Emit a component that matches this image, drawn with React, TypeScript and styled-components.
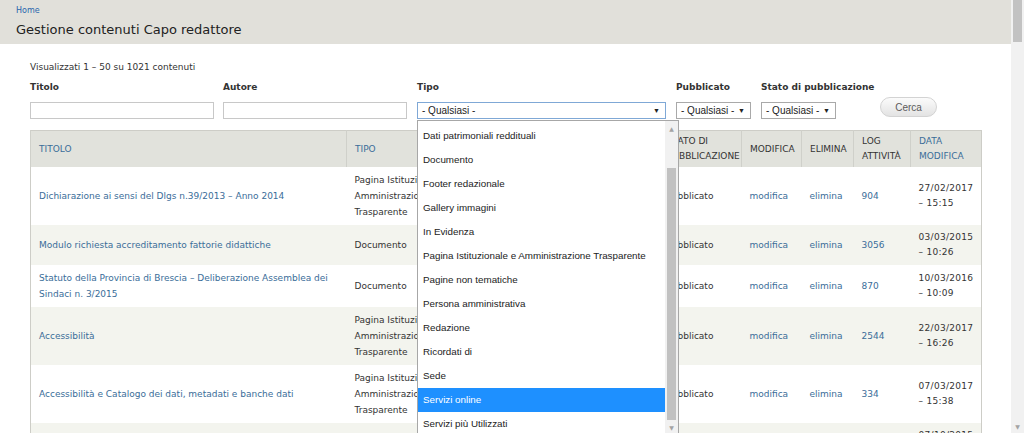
import React from 'react';
import styled, { createGlobalStyle } from 'styled-components';

const GlobalStyle = createGlobalStyle`
  html, body { margin: 0; padding: 0; background: #fff; }
  body { font-family: "DejaVu Sans", Verdana, sans-serif; color: #333; }
`;

const Page = styled.div`
  display: flex;
  width: 1024px;
  height: 433px;
  overflow: hidden;
`;

const Main = styled.div`
  flex: 1;
  min-width: 0;
  overflow: hidden;
`;

const Header = styled.header`
  height: 44px;
  box-sizing: border-box;
  padding: 5px 16px 0;
  background: #e1e0da;
`;

const Breadcrumb = styled.a`
  display: block;
  font-size: 8px;
  line-height: 11px;
  color: #2a67ad;
  text-decoration: none;
`;

const Title = styled.h1`
  margin: 4px 0 0;
  font-size: 13px;
  font-weight: normal;
  line-height: 20px;
  color: #222;
`;

const Content = styled.div`
  padding: 16px 0 0 30px;
`;

const Summary = styled.div`
  font-size: 9px;
  line-height: 14px;
  color: #333;
`;

const Filters = styled.div`
  display: flex;
  align-items: flex-end;
  margin-top: 6px;
`;

const FilterGroup = styled.div<{ $w: number; $gap?: number }>`
  position: relative;
  width: ${(p) => p.$w}px;
  margin-right: ${(p) => p.$gap ?? 10}px;
  flex: none;
`;

const Label = styled.label`
  display: block;
  font-size: 9px;
  font-weight: bold;
  line-height: 14px;
  margin-bottom: 8px;
  color: #333;
  white-space: nowrap;
`;

const TextInput = styled.input`
  display: block;
  box-sizing: border-box;
  width: 100%;
  height: 17px;
  margin: 0;
  border: 1px solid #c8c8c8;
  background: #fff;
`;

const SelectBox = styled.div<{ $w?: number; $focus?: boolean }>`
  display: flex;
  align-items: center;
  justify-content: space-between;
  box-sizing: border-box;
  width: ${(p) => (p.$w ? `${p.$w}px` : '100%')};
  height: 17px;
  padding: 0 5px 0 4px;
  border: 1px solid ${(p) => (p.$focus ? '#7fa8d6' : '#a9a9a9')};
  background: #fff;
  font-family: "Liberation Sans", Arial, sans-serif;
  font-size: 10px;
  color: #222;
`;

const Caret = styled.span`
  font-size: 7px;
  color: #222;
`;

const SearchButton = styled.button`
  flex: none;
  width: 57px;
  height: 20px;
  margin-bottom: 2px;
  padding: 0;
  border: 1px solid #d3d3d3;
  border-radius: 10px;
  background: linear-gradient(#fbfbfb, #e3e3e3);
  font-family: "Liberation Sans", Arial, sans-serif;
  font-size: 10px;
  color: #5c5c5c;
`;

const Dropdown = styled.div`
  position: absolute;
  top: calc(100% + 1px);
  left: 0;
  z-index: 10;
  display: flex;
  box-sizing: border-box;
  width: 262px;
  height: 315px;
  border: 1px solid #a7a7a7;
  background: #fff;
`;

const OptionList = styled.ul`
  flex: 1;
  margin: 0;
  padding: 3px 0 0;
  list-style: none;
  overflow: hidden;
  font-family: "Liberation Sans", Arial, sans-serif;
  font-size: 9.8px;
  color: #222;
`;

const Option = styled.li<{ $active?: boolean }>`
  height: 24px;
  line-height: 24px;
  padding-left: 5px;
  white-space: nowrap;
  background: ${(p) => (p.$active ? '#1e90ff' : 'transparent')};
  color: ${(p) => (p.$active ? '#fff' : '#222')};
`;

const ScrollBar = styled.div<{ $w: number }>`
  display: flex;
  flex-direction: column;
  width: ${(p) => p.$w}px;
  flex: none;
  background: #f1f1f1;
`;

const ScrollArrow = styled.div`
  display: flex;
  align-items: center;
  justify-content: center;
  height: 14px;
  flex: none;
  font-size: 6px;
  color: #a3a3a3;
`;

const ScrollTrack = styled.div<{ $top: number }>`
  flex: 1;
  display: flex;
  flex-direction: column;
  padding: ${(p) => p.$top}px 2px 0;
`;

const ScrollThumb = styled.div`
  flex: 1;
  background: #c1c1c1;
`;

const Table = styled.table`
  width: 951px;
  margin-top: 11px;
  border-collapse: collapse;
  table-layout: fixed;
  border: 1px solid #cdcdc7;
  font-size: 9px;
`;

const Th = styled.th`
  padding: 3px 8px;
  border-left: 1px solid #cfd0ca;
  background: #e1e2dc;
  line-height: 15px;
  height: 30px;
  font-weight: normal;
  text-align: left;
  text-transform: uppercase;
  color: #333;
`;

const Row = styled.tr<{ $alt?: boolean }>`
  background: ${(p) => (p.$alt ? '#f3f4ee' : '#fff')};
`;

const Td = styled.td`
  padding: 5px 8px;
  line-height: 16px;
  vertical-align: middle;
  color: #333;
`;

const DateCell = styled(Td)`
  line-height: 15px;
  letter-spacing: 0.3px;
`;

const Link = styled.a`
  color: #3a6d99;
  text-decoration: none;
`;

const PageThumb = styled.div`
  height: 42px;
  margin: 0 2px;
  background: #c2c2c2;
`;

const PageTrackFill = styled.div`
  flex: 1;
`;

const tipoOptions = [
  'Dati patrimoniali reddituali',
  'Documento',
  'Footer redazionale',
  'Gallery immagini',
  'In Evidenza',
  'Pagina Istituzionale e Amministrazione Trasparente',
  'Pagine non tematiche',
  'Persona amministrativa',
  'Redazione',
  'Ricordati di',
  'Sede',
  'Servizi online',
  'Servizi più Utilizzati',
  'Ufficio',
];

type Item = {
  title: string;
  type: string;
  author: string;
  log: string;
  date: string;
};

const items: Item[] = [
  { title: 'Dichiarazione ai sensi del Dlgs n.39/2013 – Anno 2014', type: 'Pagina Istituzionale e Amministrazione Trasparente', author: 'redazione', log: '904', date: '27/02/2017 – 15:15' },
  { title: 'Modulo richiesta accreditamento fattorie didattiche', type: 'Documento', author: 'redazione', log: '3056', date: '03/03/2015 – 10:26' },
  { title: 'Statuto della Provincia di Brescia – Deliberazione Assemblea dei Sindaci n. 3/2015', type: 'Documento', author: 'redazione', log: '870', date: '10/03/2016 – 10:09' },
  { title: 'Accessibilità', type: 'Pagina Istituzionale e Amministrazione Trasparente', author: 'redazione', log: '2544', date: '22/03/2017 – 16:26' },
  { title: 'Accessibilità e Catalogo dei dati, metadati e banche dati', type: 'Pagina Istituzionale e Amministrazione Trasparente', author: 'redazione', log: '334', date: '07/03/2017 – 15:38' },
  { title: 'Amministrazione Trasparente', type: 'Documento', author: 'redazione', log: '512', date: '07/10/2015 – 09:12' },
];

const colWidths = [316, 124, 188, 83, 60, 52, 57, 71];

export default function App() {
  return (
    <>
      <GlobalStyle />
      <Page>
        <Main>
          <Header>
            <Breadcrumb href="#">Home</Breadcrumb>
            <Title>Gestione contenuti Capo redattore</Title>
          </Header>
          <Content>
            <Summary>Visualizzati 1 – 50 su 1021 contenuti</Summary>
            <Filters>
              <FilterGroup $w={184} $gap={9}>
                <Label>Titolo</Label>
                <TextInput />
              </FilterGroup>
              <FilterGroup $w={184}>
                <Label>Autore</Label>
                <TextInput />
              </FilterGroup>
              <FilterGroup $w={249}>
                <Label>Tipo</Label>
                <SelectBox $focus>
                  <span>- Qualsiasi -</span>
                  <Caret>▼</Caret>
                </SelectBox>
                <Dropdown>
                  <OptionList>
                    {tipoOptions.map((o) => (
                      <Option key={o} $active={o === 'Servizi online'}>{o}</Option>
                    ))}
                  </OptionList>
                  <ScrollBar $w={13}>
                    <ScrollArrow>▲</ScrollArrow>
                    <ScrollTrack $top={33}>
                      <ScrollThumb />
                    </ScrollTrack>
                    <ScrollArrow>▼</ScrollArrow>
                  </ScrollBar>
                </Dropdown>
              </FilterGroup>
              <FilterGroup $w={75}>
                <Label>Pubblicato</Label>
                <SelectBox>
                  <span>- Qualsiasi -</span>
                  <Caret>▼</Caret>
                </SelectBox>
              </FilterGroup>
              <FilterGroup $w={109}>
                <Label>Stato di pubblicazione</Label>
                <SelectBox $w={75}>
                  <span>- Qualsiasi -</span>
                  <Caret>▼</Caret>
                </SelectBox>
              </FilterGroup>
              <SearchButton>Cerca</SearchButton>
            </Filters>
            <Table>
              <colgroup>
                {colWidths.map((w, i) => (
                  <col key={i} style={{ width: w }} />
                ))}
              </colgroup>
              <thead>
                <tr>
                  <Th><Link href="#">Titolo</Link></Th>
                  <Th><Link href="#">Tipo</Link></Th>
                  <Th>Autore</Th>
                  <Th>Stato di pubblicazione</Th>
                  <Th>Modifica</Th>
                  <Th>Elimina</Th>
                  <Th>Log attività</Th>
                  <Th><Link href="#">Data modifica</Link></Th>
                </tr>
              </thead>
              <tbody>
                {items.map((it, i) => (
                  <Row key={it.title} $alt={i % 2 === 1}>
                    <Td><Link href="#">{it.title}</Link></Td>
                    <Td>{it.type}</Td>
                    <Td>{it.author}</Td>
                    <Td>Pubblicato</Td>
                    <Td><Link href="#">modifica</Link></Td>
                    <Td><Link href="#">elimina</Link></Td>
                    <Td><Link href="#">{it.log}</Link></Td>
                    <DateCell>{it.date}</DateCell>
                  </Row>
                ))}
              </tbody>
            </Table>
          </Content>
        </Main>
        <ScrollBar $w={13}>
          <PageThumb />
          <PageTrackFill />
          <ScrollArrow>▼</ScrollArrow>
        </ScrollBar>
      </Page>
    </>
  );
}
